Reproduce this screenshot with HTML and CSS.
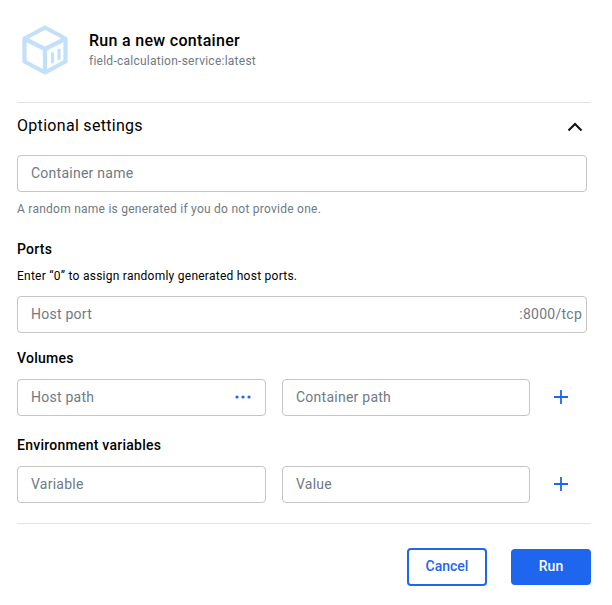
FILE: index.html
```html
<!DOCTYPE html>
<html lang="en">
<head>
<meta charset="utf-8">
<title>Run a new container</title>
<link rel="stylesheet" href="styles.css">
</head>
<body>
<main class="dialog">
  <header class="head">
    <svg class="logo" width="46" height="50" viewBox="0 0 46 50" fill="none" stroke="#c2e0fa" stroke-width="4.2" stroke-linejoin="round" stroke-linecap="round">
      <path d="M23 2.5 43.5 13.5V36.5L23 47.5 2.5 36.5V13.5Z"/>
      <path d="M3 14 23 24 43 14M23 24V46"/>
      <path d="M30.5 28.5V37M37 25V33.5" stroke-width="3.2"/>
    </svg>
    <div>
      <h1 class="title">Run a new container</h1>
      <p class="sub">field-calculation-service:latest</p>
    </div>
  </header>
  <div class="rule"></div>
  <div class="opt">
    <h2 class="opt-title">Optional settings</h2>
    <svg class="chev" width="16" height="10" viewBox="0 0 16 10" fill="none" stroke="#111" stroke-width="2"><path d="M1.5 8.5 8 2l6.5 6.5"/></svg>
  </div>
  <div class="form">
    <div class="field name-field"><span class="ph">Container name</span></div>
    <p class="help">A random name is generated if you do not provide one.</p>
    <h3 class="label ports">Ports</h3>
    <p class="note">Enter “0” to assign randomly generated host ports.</p>
    <div class="field port-field"><span class="ph">Host port</span><span class="suffix">:8000/tcp</span></div>
    <h3 class="label volumes">Volumes</h3>
    <div class="row">
      <div class="field left"><span class="ph">Host path</span>
        <svg class="dots" width="16" height="4" viewBox="0 0 16 4" fill="#1f66ee"><circle cx="2" cy="2" r="1.6"/><circle cx="8" cy="2" r="1.6"/><circle cx="14" cy="2" r="1.6"/></svg>
      </div>
      <div class="field right"><span class="ph">Container path</span></div>
      <svg class="plus" width="14" height="14" viewBox="0 0 14 14" stroke="#1f66ee" stroke-width="1.8"><path d="M7 0v14M0 7h14"/></svg>
    </div>
    <h3 class="label env">Environment variables</h3>
    <div class="row">
      <div class="field left"><span class="ph">Variable</span></div>
      <div class="field right"><span class="ph">Value</span></div>
      <svg class="plus" width="14" height="14" viewBox="0 0 14 14" stroke="#1f66ee" stroke-width="1.8"><path d="M7 0v14M0 7h14"/></svg>
    </div>
  </div>
  <div class="rule rule-foot"></div>
  <footer class="foot">
    <button class="btn cancel" type="button">Cancel</button>
    <button class="btn run" type="button">Run</button>
  </footer>
</main>
</body>
</html>
```
FILE: styles.css
```css
* { box-sizing: border-box; }
html, body { margin: 0; background: #fff; }
body { font-family: Roboto, sans-serif; color: #000; }
.dialog { width: 612px; height: 605px; padding: 25px 21px 0 17px; overflow: hidden; }
.head { display: flex; align-items: flex-start; gap: 21px; padding-left: 5px; height: 77px; }
.logo { flex: none; }
.title { margin: 6px 0 0; font-size: 16px; line-height: 20px; font-weight: 500; letter-spacing: .3px; }
.sub { margin: 2px 0 0; font-size: 12px; line-height: 16px; color: #6f7a85; letter-spacing: .25px; }
.rule { height: 1px; background: #e2e2e2; }
.opt { display: flex; justify-content: space-between; align-items: center; height: 52px; padding-right: 8px; }
.opt-title { margin: 0 0 6px; font-size: 16px; line-height: 20px; font-weight: 400; letter-spacing: .3px; }
.chev { margin-bottom: 4px; }
.form { width: 570px; }
.field { display: flex; align-items: center; justify-content: space-between; height: 37px; border: 1px solid #c4c4c4; border-radius: 4px; padding: 0 13px 2px; font-size: 14px; line-height: 18px; }
.ph { color: #6f7a85; letter-spacing: .25px; }
.suffix { color: #6f7a85; margin-right: -9px; letter-spacing: .25px; }
.help { margin: 9px 0 0; font-size: 12px; line-height: 16px; color: #6f7a85; letter-spacing: .25px; }
.label { margin: 0; font-size: 14px; line-height: 18px; font-weight: 500; letter-spacing: .25px; }
.ports { margin-top: 23px; }
.note { margin: 10px 0 0; font-size: 12px; line-height: 16px; letter-spacing: .25px; }
.port-field { margin-top: 12px; }
.volumes { margin-top: 16px; }
.env { margin-top: 20px; }
.row { display: flex; align-items: center; margin-top: 12px; width: 574px; }
.left { width: 249px; flex: none; padding-right: 14px; }
.right { width: 248px; flex: none; margin-left: 16px; }
.plus { flex: none; margin-left: 24px; margin-bottom: 2px; }
.rule-foot { margin-top: 20px; }
.foot { display: flex; justify-content: flex-end; gap: 24px; margin-top: 24px; }
.btn { width: 80px; font-family: Roboto, sans-serif; font-size: 14px; font-weight: 500; border-radius: 4px; padding: 0 0 2px; }
.cancel { height: 38px; background: #fff; color: #1f66ee; border: 2px solid #1f66ee; }
.run { height: 36px; margin-top: 1px; background: #1f66ee; color: #fff; border: 0; }
```
